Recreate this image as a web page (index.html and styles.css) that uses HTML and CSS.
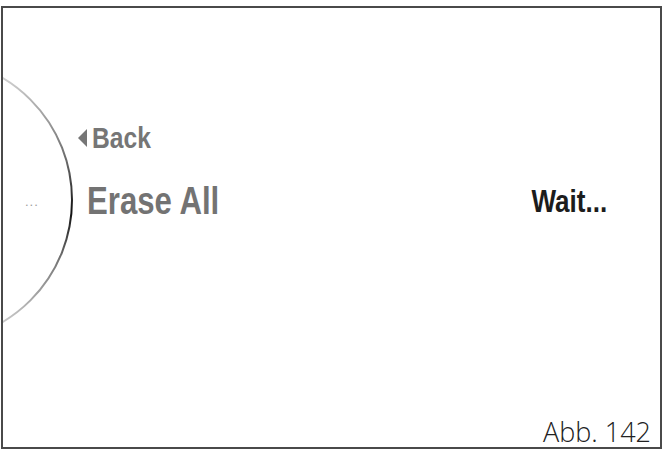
FILE: index.html
```html
<!DOCTYPE html>
<html lang="en">
<head>
    <meta charset="UTF-8">
    <meta name="viewport" content="width=device-width, initial-scale=1.0">
    <title>Erase All</title>
    <link rel="stylesheet" href="styles.css">
</head>
<body>
    <div class="frame">
        <div class="screen">
            <!-- Rotary dial edge on the left -->
            <svg class="dial" width="80" height="439" viewBox="0 0 80 439">
                <defs>
                    <linearGradient id="dial-fade" gradientUnits="userSpaceOnUse" x1="0" y1="70" x2="0" y2="314">
                        <stop offset="0" stop-color="#d0d0d0"/>
                        <stop offset="0.35" stop-color="#666"/>
                        <stop offset="0.55" stop-color="#111"/>
                        <stop offset="0.75" stop-color="#777"/>
                        <stop offset="1" stop-color="#c8c8c8"/>
                    </linearGradient>
                </defs>
                <circle cx="-73" cy="192" r="142" fill="none" stroke="url(#dial-fade)" stroke-width="2"/>
                <text class="dial-dots" x="22" y="198">...</text>
            </svg>

            <div class="menu">
                <div class="back">
                    <span class="back-arrow"></span>
                    <span class="narrow">Back</span>
                </div>
                <div class="current-row">
                    <span class="current narrow">Erase All</span>
                    <span class="status narrow">Wait...</span>
                </div>
            </div>

            <div class="caption">Abb. 142</div>
        </div>
    </div>
</body>
</html>
```

FILE: styles.css
```css
body {
    margin: 0;
    background-color: #fff;
    font-family: "Liberation Sans", Arial, sans-serif;
}

.frame {
    width: 661px;
    height: 443px;
    margin: 6px 0 0 1px;
    border: 2px solid #4a4a4a;
    box-sizing: border-box;
}

.screen {
    position: relative;
    height: 100%;
    display: flex;
    flex-direction: column;
}

.dial {
    position: absolute;
    left: 0;
    top: 0;
}

.dial-dots {
    font-size: 13px;
    fill: #9c9c9c;
    letter-spacing: 1px;
}

/* no condensed face installed, so squeeze the bold sans */
.narrow {
    display: inline-block;
    transform: scaleX(0.82);
    transform-origin: left center;
}

.menu {
    padding: 115px 53px 0 75px;
}

.back {
    display: flex;
    align-items: center;
    font-size: 30px;
    line-height: 1;
    font-weight: bold;
    color: #767676;
}

.back-arrow {
    width: 0;
    height: 0;
    border-top: 9px solid transparent;
    border-bottom: 9px solid transparent;
    border-right: 9px solid #767676;
    margin-right: 5px;
}

.current-row {
    display: flex;
    justify-content: space-between;
    align-items: center;
    margin-top: 29px;
}

.current {
    margin-left: 9px;
    font-size: 38px;
    line-height: 1;
    font-weight: bold;
    color: #737373;
}

.status {
    font-size: 31px;
    line-height: 1;
    font-weight: bold;
    color: #1c1c1c;
    transform: scaleX(0.84);
    transform-origin: right center;
}

.caption {
    margin-top: auto;
    align-self: flex-end;
    padding: 0 9px 2px 0;
    font-family: "Open Sans", "Liberation Sans", sans-serif;
    font-weight: 300;
    font-size: 27px;
    line-height: 1;
    color: #222;
}
```
